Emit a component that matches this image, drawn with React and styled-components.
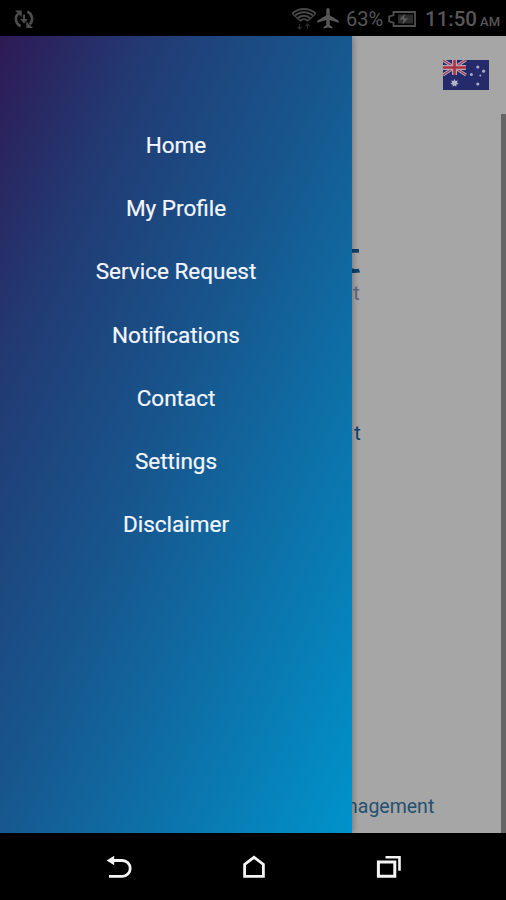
import styled, { createGlobalStyle } from 'styled-components';

const items = [
    "Home",
    "My Profile",
    "Service Request",
    "Notifications",
    "Contact",
    "Settings",
    "Disclaimer"
];

function SyncIcon() {
    return (
        <svg width="20" height="20" viewBox="0 0 20 20" fill="none" stroke="#4d4d4d" strokeWidth="2.6">
            <path d="M6.6 17.2A7.8 7.8 0 0 1 4.2 4.6" />
            <path d="M13.4 2.8A7.8 7.8 0 0 1 15.8 15.4" />
            <path d="M1 1.5h6.7v6.5z" fill="#4d4d4d" stroke="none" />
            <path d="M19 18.9h-6.7v-6.5z" fill="#4d4d4d" stroke="none" />
            <path d="M10 5.6v6" strokeWidth="2.2" />
            <path d="M6.2 10h7.6L10 14.4z" fill="#4d4d4d" stroke="none" />
        </svg>
    );
}

function WifiIcon() {
    return (
        <svg width="26" height="24" viewBox="0 0 26 24" fill="none" stroke="#464646" strokeWidth="1.9">
            <path d="M1.2 6.6C8 .4 18 .4 24.8 6.6" />
            <path d="M3.6 9.2C9 4 17 4 22.4 9.2" />
            <path d="M6.2 11.6C10 7.8 16 7.8 19.8 11.6" />
            <path d="M9 14c2.4-2.5 5.6-2.5 8 0" />
            <path d="M1.2 6.6L9.6 14.2M24.8 6.6L16.4 14.2" strokeWidth="1.2" />
            <path d="M8.5 17v5M6.5 20l2 2 2-2M16.5 22v-5M14.5 19l2-2 2 2" stroke="#2b2b2b" strokeWidth="1.3" />
        </svg>
    );
}

function PlaneIcon() {
    return (
        <svg width="22" height="21" viewBox="0 0 22 21" fill="#575757">
            <path d="M11 0c1.1 0 1.7 1 1.7 2.3v5l9 5.5v2l-9-2.8v5l2.8 2v1.6L11 19.4l-4.5 1.2V19l2.8-2v-5l-9 2.8v-2l9-5.500v-5C9.3 1 9.9 0 11 0z" />
        </svg>
    );
}

function BatteryIcon() {
    return (
        <svg width="28" height="16" viewBox="0 0 28 16" fill="none">
            <path d="M5.5 1H27v14H5.5v-3.3L1.2 10.5v-5l4.3-1.2z" stroke="#505050" strokeWidth="1.8" />
            <path d="M10 3.5h15v9H10z" fill="#2e2e2e" />
            <path d="M17 2.5l-5.5 6h4l-1 5 5.5-6.3h-4z" fill="#5c5c5c" />
        </svg>
    );
}

function Flag() {
    return (
        <svg width="46" height="30" viewBox="0 0 46 30">
            <path d="M0 0h46v30H0z" fill="#242a6a" />
            <path d="M0 0l23 15M23 0L0 15" stroke="#b0a6b8" strokeWidth="3.2" />
            <path d="M0 0l23 15M23 0L0 15" stroke="#a83d50" strokeWidth="1.1" />
            <path d="M11.5 0v15M0 7.5h23" stroke="#b0a6b8" strokeWidth="5" />
            <path d="M11.5 0v15M0 7.5h23" stroke="#ad3340" strokeWidth="2.6" />
            <path d="M11.5 19l1.1 2 2.2-.6-.8 2.1 1.6 1.5-2.2.5-.1 2.2-1.8-1.3-1.8 1.3-.1-2.2-2.2-.5L9 22.5l-.8-2.1 2.2.6z" fill="#b3b5c4" />
            <g fill="#a8abc1">
                <circle cx="34.8" cy="7" r="1.6" />
                <circle cx="28.4" cy="14.5" r="1.5" />
                <circle cx="40.6" cy="11.2" r="1.6" />
                <circle cx="37.3" cy="15.5" r="1" />
                <circle cx="34.8" cy="24" r="1.6" />
            </g>
        </svg>
    );
}

function BackIcon() {
    return (
        <svg width="26" height="24" viewBox="0 0 26 24" fill="none" stroke="#f5f5f5" strokeWidth="2.8">
            <path d="M7 5.5h9.3a7.9 7.9 0 0 1 0 15.8H3" />
            <path d="M.6 5.5L8.2.8v9.4z" fill="#f5f5f5" stroke="none" />
        </svg>
    );
}

function HomeIcon() {
    return (
        <svg width="24" height="24" viewBox="0 0 24 24" fill="none" stroke="#f5f5f5" strokeWidth="2.8">
            <path d="M2.6 21.3V9.5L12 2.3l9.4 7.2v11.8z" />
        </svg>
    );
}

function RecentIcon() {
    return (
        <svg width="26" height="24" viewBox="0 0 26 24" fill="none" stroke="#f5f5f5">
            <path d="M2.4 6.9h16.4v14.3H2.4z" strokeWidth="3" />
            <path d="M9.5 2.2h14v13.5" strokeWidth="2.6" />
        </svg>
    );
}

export default function App() {
    return (
        <>
            <GlobalStyle />
            <Screen>
                <StatusBar>
                    <SyncIcon />
                    <StatusInfo>
                        <WifiIcon />
                        <PlaneIcon />
                        <Percent>63%</Percent>
                        <BatteryIcon />
                        <Clock>11:50<small>AM</small></Clock>
                    </StatusInfo>
                </StatusBar>
                <Main>
                    <Drawer>
                        {items.map((item) => <Item key={item}>{item}</Item>)}
                    </Drawer>
                    <Page>
                        <Header>
                            <Flag />
                        </Header>
                        <Content>
                            <Brand>t</Brand>
                            <Tagline>t</Tagline>
                            <Label>t</Label>
                            <Footer>nagement</Footer>
                        </Content>
                    </Page>
                </Main>
                <NavBar>
                    <BackIcon />
                    <HomeIcon />
                    <RecentIcon />
                </NavBar>
            </Screen>
        </>
    );
}

const GlobalStyle = createGlobalStyle`
    * {
        box-sizing: border-box;
    }
    body {
        margin: 0;
        background-color: #000000;
        font-family: Roboto, sans-serif;
    }
    svg {
        display: block;
        flex-shrink: 0;
    }
`;

const Screen = styled.div`
    width: 506px;
    height: 900px;
    display: flex;
    flex-direction: column;
    overflow: hidden;
    background-color: #000000;
`;

const StatusBar = styled.header`
    height: 36px;
    padding: 1px 6px 0 14px;
    display: flex;
    align-items: center;
    justify-content: space-between;
    color: #575757;
`;

const StatusInfo = styled.div`
    display: flex;
    align-items: center;
`;

const Percent = styled.span`
    width: 38px;
    margin: 0 4px 0 7px;
    font-size: 20px;
    line-height: 24px;
`;

const Clock = styled.span`
    width: 75px;
    margin: 4px 0 0 9px;
    font-size: 20.5px;
    line-height: 24px;
    font-weight: 500;
    white-space: nowrap;
    small {
        margin-left: 3px;
        font-size: 13px;
    }
`;

const Main = styled.main`
    height: 797px;
    display: flex;
`;

const Drawer = styled.nav`
    width: 352px;
    padding-top: 77px;
    display: flex;
    flex-direction: column;
    z-index: 1;
    background: linear-gradient(to bottom right, #2e1a55, #223b74 22%, #17568d 48%, #0093cb);
    box-shadow: 0 0 7px rgba(0, 0, 0, 0.4);
`;

const Item = styled.a`
    height: 63.3px;
    display: flex;
    align-items: center;
    justify-content: center;
    color: #f4f6ff;
    font-size: 22.5px;
    line-height: 28px;
    -webkit-text-stroke: 0.2px #f4f6ff;
`;

const Page = styled.section`
    flex: 1;
    display: flex;
    flex-direction: column;
    background-color: #a6a6a6;
    color: #123f68;
`;

const Header = styled.div`
    height: 78px;
    padding: 24px 17px 0 0;
    display: flex;
    justify-content: flex-end;
`;

const Content = styled.div`
    flex: 1;
    display: flex;
    flex-direction: column;
    border-right: 5px solid #656565;
`;

const Brand = styled.span`
    align-self: flex-start;
    margin: 118px 0 0 -16px;
    font-family: Inter, sans-serif;
    font-size: 43px;
    line-height: 50px;
    font-weight: 500;
    transform: scaleX(1.75);
    transform-origin: left;
`;

const Tagline = styled.span`
    margin: -1px 0 0 1px;
    color: #626780;
    font-size: 21px;
    line-height: 24px;
`;

const Label = styled.span`
    margin: 114px 0 0 2px;
    font-size: 21px;
    line-height: 28px;
`;

const Footer = styled.span`
    margin: auto 0 12px -5px;
    color: #24506f;
    font-size: 19.5px;
    line-height: 28px;
`;

const NavBar = styled.footer`
    height: 67px;
    padding: 1px 104px 0 106px;
    display: flex;
    align-items: center;
    justify-content: space-between;
`;
